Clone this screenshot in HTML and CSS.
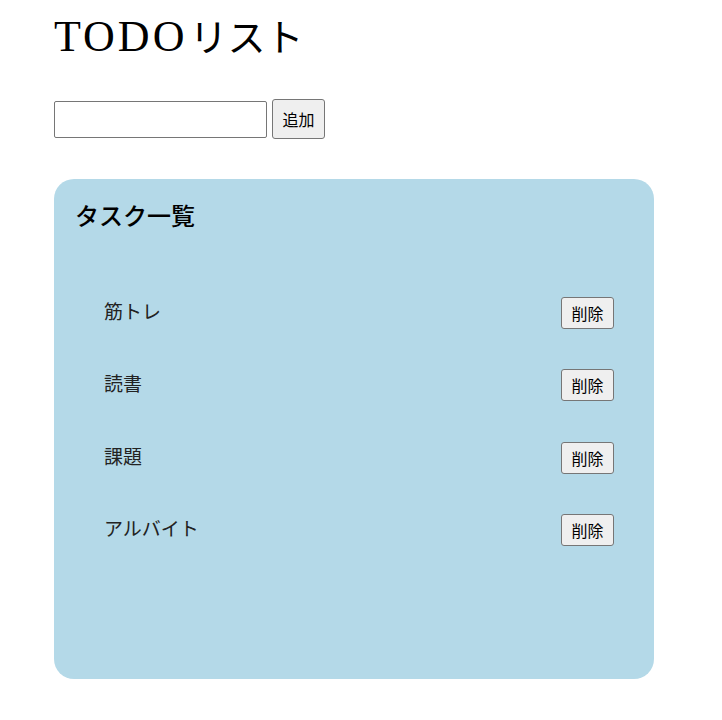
FILE: index.html
```html
<!DOCTYPE html>
<html lang="ja">
<head>
<meta charset="utf-8">
<title>TODOリスト</title>
<link rel="stylesheet" href="styles.css">
</head>
<body>
<div class="app">
  <h1 class="title"><span class="title-latin">TODO</span><span class="title-kana">リスト</span></h1>
  <form class="add-form">
    <input class="add-input" type="text">
    <button class="btn btn-add" type="button">追加</button>
  </form>
  <section class="card">
    <h2 class="card-title">タスク一覧</h2>
    <ul class="task-list">
      <li class="task"><span class="task-name">筋トレ</span><button class="btn btn-del" type="button">削除</button></li>
      <li class="task"><span class="task-name">読書</span><button class="btn btn-del" type="button">削除</button></li>
      <li class="task"><span class="task-name">課題</span><button class="btn btn-del" type="button">削除</button></li>
      <li class="task"><span class="task-name">アルバイト</span><button class="btn btn-del" type="button">削除</button></li>
    </ul>
  </section>
</div>
</body>
</html>
```

FILE: styles.css
```css
html, body {
  margin: 0;
  padding: 0;
  background: #ffffff;
}

body {
  font-family: "Liberation Serif", "Noto Sans CJK JP", serif;
  color: #000;
}

.app {
  width: 600px;
  padding: 12px 0 0 54px;
}

.title {
  margin: 0;
  height: 50px;
  font-size: 44px;
  line-height: 50px;
  font-weight: normal;
}

.title-latin {
  letter-spacing: 3px;
}

.title-kana {
  font-size: 38px;
  line-height: 40px;
  letter-spacing: 0;
  margin-left: 2px;
}

.add-form {
  display: flex;
  align-items: center;
  gap: 5px;
  margin: 37px 0 0 0;
}

.add-input {
  box-sizing: border-box;
  width: 213px;
  height: 37px;
  margin: 0;
  padding: 2px 6px;
  border: 1px solid #767676;
  border-radius: 2px;
  font-family: "Noto Sans CJK JP", sans-serif;
  font-size: 16px;
  background: #fff;
}

.btn {
  box-sizing: border-box;
  margin: 0;
  padding: 0 9px;
  border: 1px solid #767676;
  border-radius: 3px;
  background: #efefef;
  color: #000;
  font-family: "Noto Sans CJK JP", sans-serif;
  font-size: 16px;
  line-height: 22px;
  width: 53px;
}

.btn-add {
  height: 40px;
}

.btn-del {
  height: 32px;
}

.card {
  box-sizing: border-box;
  margin-top: 40px;
  height: 500px;
  padding: 22px 21px;
  background: #b4d9e8;
  border-radius: 20px;
}

.card-title {
  margin: 0;
  font-size: 24px;
  line-height: 32px;
  font-weight: 500;
}

.task-list {
  list-style: none;
  margin: 44px 0 0 0;
  padding: 0 19px 0 29px;
}

.task {
  display: flex;
  align-items: center;
  justify-content: space-between;
  padding: 20px 0;
  height: 32px;
  box-sizing: content-box;
}

.task + .task {
  margin-top: 0.4px;
}

.task-name {
  font-size: 19px;
  line-height: 32px;
  color: #222;
}
```
